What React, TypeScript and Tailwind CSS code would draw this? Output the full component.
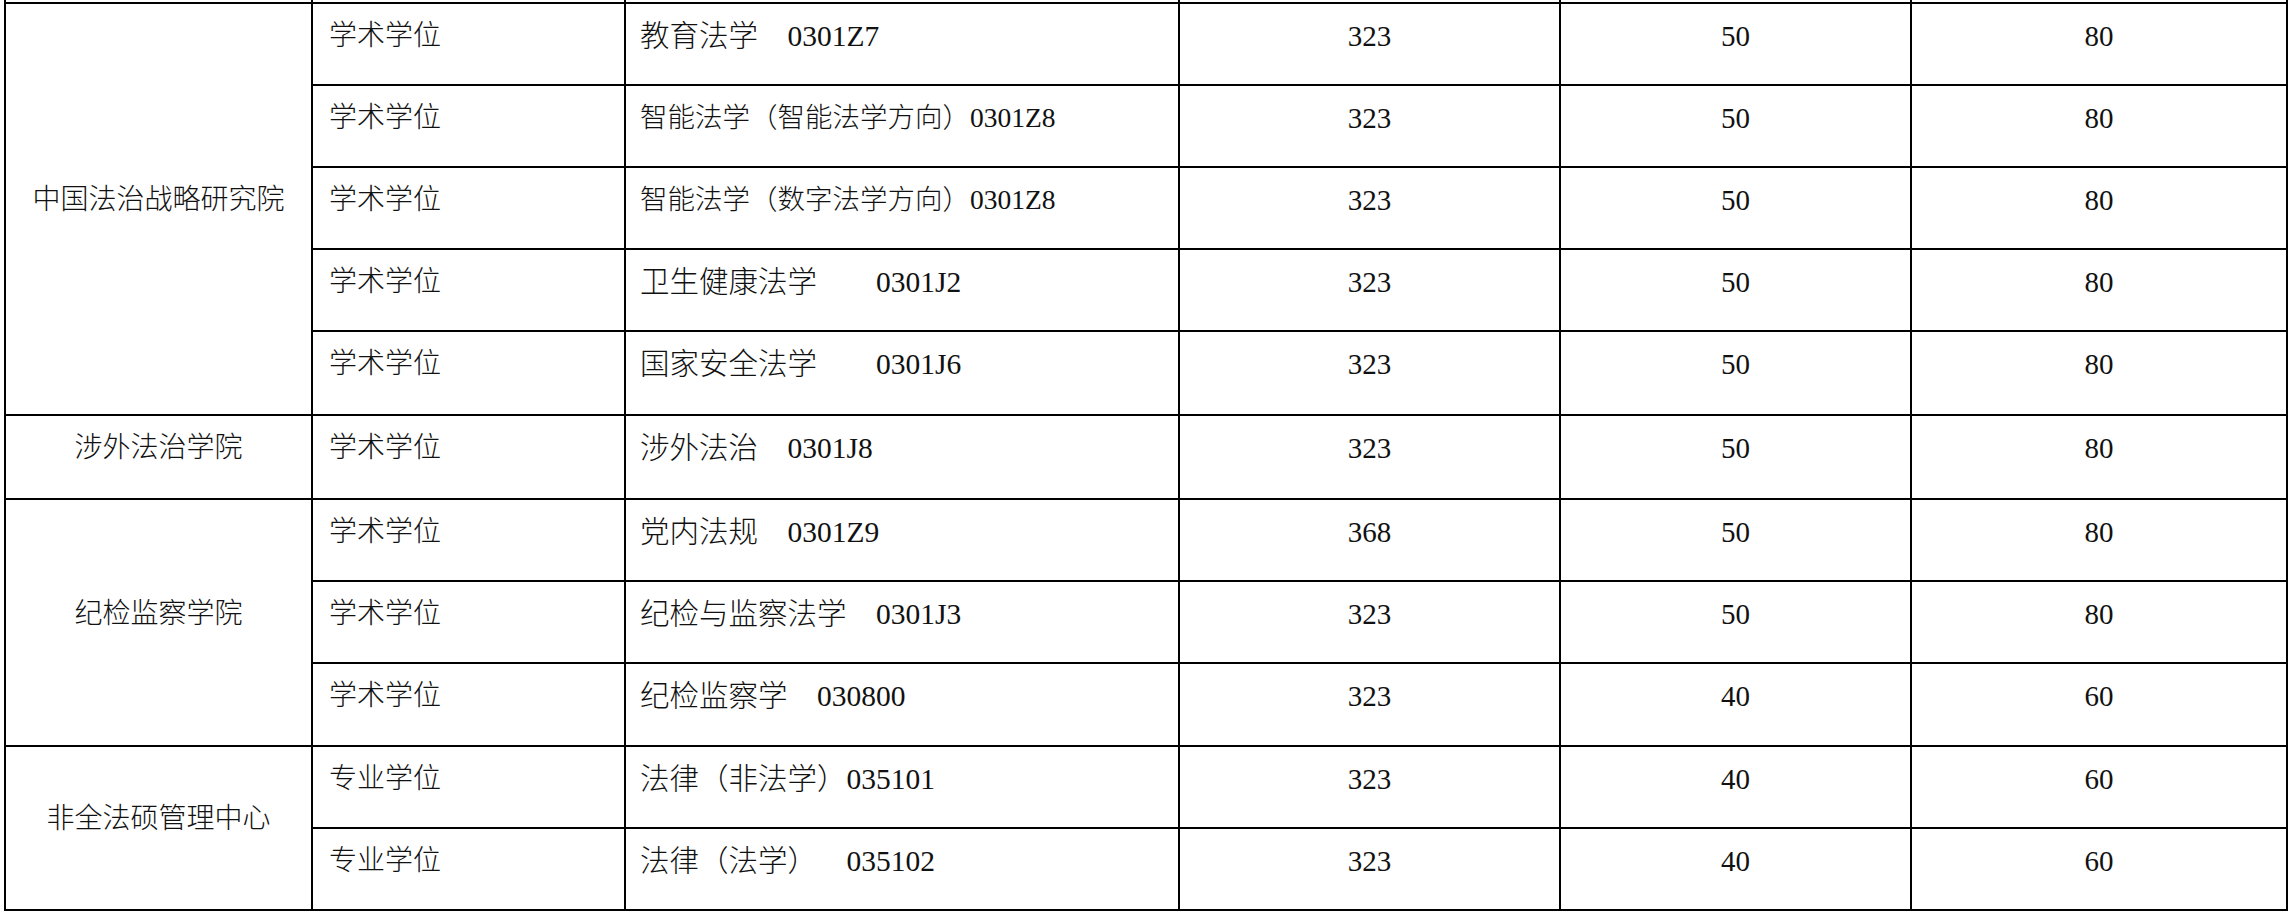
import React from "react";

type Row = { type: string; major: string; total: string; single: string; multi: string; small?: boolean };
type Group = { school: string; rows: Row[] };

const groups: Group[] = [
  {
    school: "中国法治战略研究院",
    rows: [
      { type: "学术学位", major: "教育法学　0301Z7", total: "323", single: "50", multi: "80" },
      { type: "学术学位", major: "智能法学（智能法学方向）0301Z8", total: "323", single: "50", multi: "80", small: true },
      { type: "学术学位", major: "智能法学（数字法学方向）0301Z8", total: "323", single: "50", multi: "80", small: true },
      { type: "学术学位", major: "卫生健康法学　　0301J2", total: "323", single: "50", multi: "80" },
      { type: "学术学位", major: "国家安全法学　　0301J6", total: "323", single: "50", multi: "80" },
    ],
  },
  {
    school: "涉外法治学院",
    rows: [{ type: "学术学位", major: "涉外法治　0301J8", total: "323", single: "50", multi: "80" }],
  },
  {
    school: "纪检监察学院",
    rows: [
      { type: "学术学位", major: "党内法规　0301Z9", total: "368", single: "50", multi: "80" },
      { type: "学术学位", major: "纪检与监察法学　0301J3", total: "323", single: "50", multi: "80" },
      { type: "学术学位", major: "纪检监察学　030800", total: "323", single: "40", multi: "60" },
    ],
  },
  {
    school: "非全法硕管理中心",
    rows: [
      { type: "专业学位", major: "法律（非法学）035101", total: "323", single: "40", multi: "60" },
      { type: "专业学位", major: "法律（法学）　  035102", total: "323", single: "40", multi: "60" },
    ],
  },
];

// row heights measured off the scan, top to bottom
const heights = ["h-[82px]", "h-[82px]", "h-[82px]", "h-[82px]", "h-[84px]", "h-[84px]", "h-[82px]", "h-[82px]", "h-[83px]", "h-[82px]", "h-[82px]"];

const cell = "border-2 border-black align-top pt-[14px] leading-[36px] whitespace-pre";

export default function App() {
  let n = 0;
  return (
    <div
      className="min-h-screen bg-white text-[#111] text-[28px] font-light"
      style={{ fontFamily: '"Liberation Serif", "Noto Sans CJK SC", serif' }}
    >
      <table className="ml-[4px] border-collapse table-fixed w-[2282px]">
        <colgroup>
          <col className="w-[307px]" />
          <col className="w-[313px]" />
          <col className="w-[554px]" />
          <col className="w-[381px]" />
          <col className="w-[351px]" />
          <col className="w-[376px]" />
        </colgroup>
        <tbody>
          {/* tail of the row above, cut off by the page top */}
          <tr>
            {[0, 1, 2, 3, 4, 5].map((i) => (
              <td key={i} className="border-2 border-t-0 border-black h-[3px] p-0" />
            ))}
          </tr>
          {groups.map((g) =>
            g.rows.map((r, i) => {
              const h = heights[n++];
              return (
                <tr key={g.school + i}>
                  {i === 0 && (
                    <td
                      rowSpan={g.rows.length}
                      className="border-2 border-black align-middle text-center pb-[18px] leading-[36px]"
                    >
                      {g.school}
                    </td>
                  )}
                  <td className={`${cell} ${h} pl-[16px]`}>{r.type}</td>
                  <td className={`${cell} pl-[14px] ${r.small ? "text-[27.5px]" : "text-[29.5px]"}`}>{r.major}</td>
                  <td className={`${cell} text-center text-[29px]`}>{r.total}</td>
                  <td className={`${cell} text-center text-[29px]`}>{r.single}</td>
                  <td className={`${cell} text-center text-[29px]`}>{r.multi}</td>
                </tr>
              );
            })
          )}
        </tbody>
      </table>
    </div>
  );
}
